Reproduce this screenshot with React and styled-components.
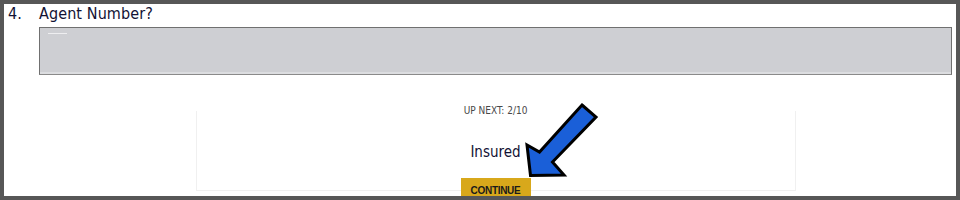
import React from "react";
import styled, { createGlobalStyle } from "styled-components";

const GlobalStyle = createGlobalStyle`
  html, body {
    margin: 0;
    padding: 0;
    background: #575757;
  }
`;

// gray frame round the captured page
const Frame = styled.div`
  width: 960px;
  height: 200px;
  box-sizing: border-box;
  padding: 4px;
  background: #575757;
`;

const Panel = styled.div`
  position: relative;
  height: 192px;
  overflow: hidden;
  background: #fff;
  padding: 0 4px;
  font-family: "DejaVu Sans Condensed", "DejaVu Sans", sans-serif;
  font-stretch: condensed;
`;

const Question = styled.div`
  display: grid;
  grid-template-columns: 31px 1fr;
`;

const Number = styled.span`
  font-size: 16px;
  line-height: 19px;
  color: #121234;
`;

const Body = styled.div`
  display: flex;
  flex-direction: column;
`;

const Label = styled.span`
  font-size: 16px;
  line-height: 19px;
  letter-spacing: 0.1px;
  color: #121234;
`;

const Field = styled.div`
  position: relative;
  margin-top: 4px;
  height: 48px;
  box-sizing: border-box;
  background: #cecfd3;
  border: 1px solid #707070;
  border-bottom-color: #8a8a8a;
  box-shadow: inset 0 -2px 0 #dcdde0;

  &::after {
    content: "";
    position: absolute;
    left: 8px;
    top: 5px;
    width: 19px;
    height: 1px;
    background: #eeeef0;
  }
`;

const Card = styled.div`
  width: 600px;
  height: 80px;
  margin: 36px auto 0;
  box-sizing: border-box;
  border: 1px solid #f0f0f0;
  border-top: none;
  display: flex;
  flex-direction: column;
  align-items: center;

  & > * {
    flex-shrink: 0;
  }
`;

const UpNext = styled.span`
  margin-top: -6px;
  font-size: 10px;
  line-height: 12px;
  color: #484848;
`;

const Title = styled.span`
  margin-top: 25px;
  font-size: 15px;
  line-height: 20px;
  color: #121234;
`;

const Continue = styled.button`
  margin-top: 16px;
  height: 24px;
  width: 70px;
  padding: 0;
  border: none;
  background: #d8a81b;
  font-family: "Liberation Sans", Arial, sans-serif;
  font-weight: 700;
  font-size: 10px;
  letter-spacing: -0.3px;
  color: #1a1a1a;
`;

// blue annotation arrow laid over the page
const Arrow = styled.svg`
  position: absolute;
  left: 516px;
  top: 96px;
`;

export default function App() {
  return (
    <>
      <GlobalStyle />
      <Frame>
        <Panel>
          <Question>
            <Number>4.</Number>
            <Body>
              <Label>Agent Number?</Label>
              <Field />
              <Card>
                <UpNext>UP NEXT: 2/10</UpNext>
                <Title>Insured</Title>
                <Continue>CONTINUE</Continue>
              </Card>
            </Body>
          </Question>
          <Arrow width="90" height="90" viewBox="0 0 90 90">
            <polygon
              points="62,5 76,17 32.5,62 44,75 10.5,75.5 7,45 19.5,52"
              fill="#1a5fd8"
              stroke="#000"
              strokeWidth="3"
              strokeLinejoin="miter"
            />
          </Arrow>
        </Panel>
      </Frame>
    </>
  );
}
